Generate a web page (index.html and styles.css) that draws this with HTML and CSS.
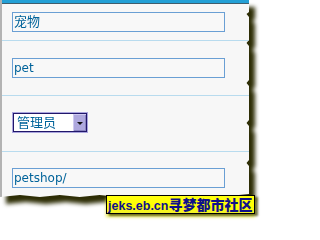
FILE: index.html
```html
<!DOCTYPE html>
<html>
<head>
<meta charset="utf-8">
<link rel="stylesheet" href="styles.css">
</head>
<body>
<div class="wrap">
  <div class="sheet">
    <div class="bar"></div>
    <div class="row r1"><div class="field cjk">宠物</div></div>
    <div class="row r2"><div class="field">pet</div></div>
    <div class="row r3">
      <div class="select">
        <span class="sel-text">管理员</span>
        <span class="sel-btn"><span class="arrow"></span></span>
      </div>
    </div>
    <div class="row r4"><div class="field">petshop/</div></div>
  </div>
</div>
<div class="mark"><span class="lat">jeks.eb.cn</span><span class="han">寻梦都市社区</span></div>
</body>
</html>
```

FILE: styles.css
```css
html, body {
  margin: 0;
  padding: 0;
  background: #ffffff;
  width: 262px;
  height: 217px;
  overflow: hidden;
}
.wrap {
  width: 249px;
  filter: drop-shadow(6px 7px 2px rgba(45, 45, 5, 1));
}
.sheet {
  box-sizing: border-box;
  width: 249px;
  height: 197px;
  background: #f7f7f7;
  border-left: 2px solid #b3b3b3;
  font-family: "DejaVu Sans", "Noto Sans CJK SC", sans-serif;
  font-size: 12px;
  color: #00639a;
  clip-path: polygon(0 0, 100% 0, 100% 12px, 99% 14px, 100% 17px, 100% 40px, 99% 43px, 100% 46px, 100% 80px, 99% 83px, 100% 86px, 100% 120px, 99% 123px, 100% 126px, 100% 160px, 99% 163px, 100% 166px, 100% 194px, 96% 195px, 92% 197px, 86% 195px, 80% 197px, 72% 195px, 64% 197px, 56% 195px, 48% 197px, 40% 195px, 32% 197px, 24% 195px, 16% 197px, 8% 195px, 0 197px);
}
.bar {
  height: 3px;
  background: #23a0d6;
  border-bottom: 1px solid #3f5d6c;
}
.row {
  box-sizing: border-box;
  padding-left: 10px;
  border-bottom: 1px solid #b8dbee;
}
.r1 { height: 37px; padding-top: 8px; }
.r2 { height: 55px; padding-top: 17px; }
.r3 { height: 56px; padding-top: 16px; }
.r4 { padding-top: 16px; border-bottom: none; }
.field {
  box-sizing: border-box;
  width: 213px;
  height: 20px;
  border: 1px solid #6a9fd4;
  background: #f8f8f8;
  padding-left: 1px;
  line-height: 18px;
  white-space: nowrap;
}
.cjk { font-size: 13px; }
.select {
  box-sizing: border-box;
  width: 76px;
  height: 21px;
  border: 1px solid #aaa5de;
  display: flex;
}
.sel-text {
  flex: 1;
  box-sizing: border-box;
  height: 19px;
  border: 1px solid #21176a;
  border-right: none;
  background: #ffffff;
  font-size: 13px;
  line-height: 17px;
  padding-left: 3px;
}
.sel-btn {
  box-sizing: border-box;
  width: 14px;
  height: 19px;
  border: 1px solid #21176a;
  border-left: none;
  background: #aea8de;
  display: flex;
  align-items: center;
  justify-content: center;
  box-shadow: inset 1px 1px 0 #cfcaf0, inset -1px -1px 0 #8a84c0;
}
.arrow {
  width: 0;
  height: 0;
  border-left: 3px solid transparent;
  border-right: 3px solid transparent;
  border-top: 3px solid #111111;
  margin-top: 1px;
}
.mark {
  position: absolute;
  left: 106px;
  top: 195px;
  box-sizing: border-box;
  width: 149px;
  height: 19px;
  border: 1px solid #000000;
  background: linear-gradient(#ffff10 0%, #ffff00 60%, #f2f22a 100%);
  color: #10108a;
  font-weight: bold;
  line-height: 17px;
  padding-left: 1px;
  white-space: nowrap;
  overflow: hidden;
  box-shadow: 3px 2px 2px rgba(60, 60, 0, 0.7), 0 3px 3px rgba(230, 230, 40, 0.8);
}
.lat {
  font-family: "Liberation Sans", sans-serif;
  font-size: 12.5px;
}
.han {
  font-family: "Noto Sans CJK SC", sans-serif;
  font-size: 14px;
  font-weight: 900;
}
```
